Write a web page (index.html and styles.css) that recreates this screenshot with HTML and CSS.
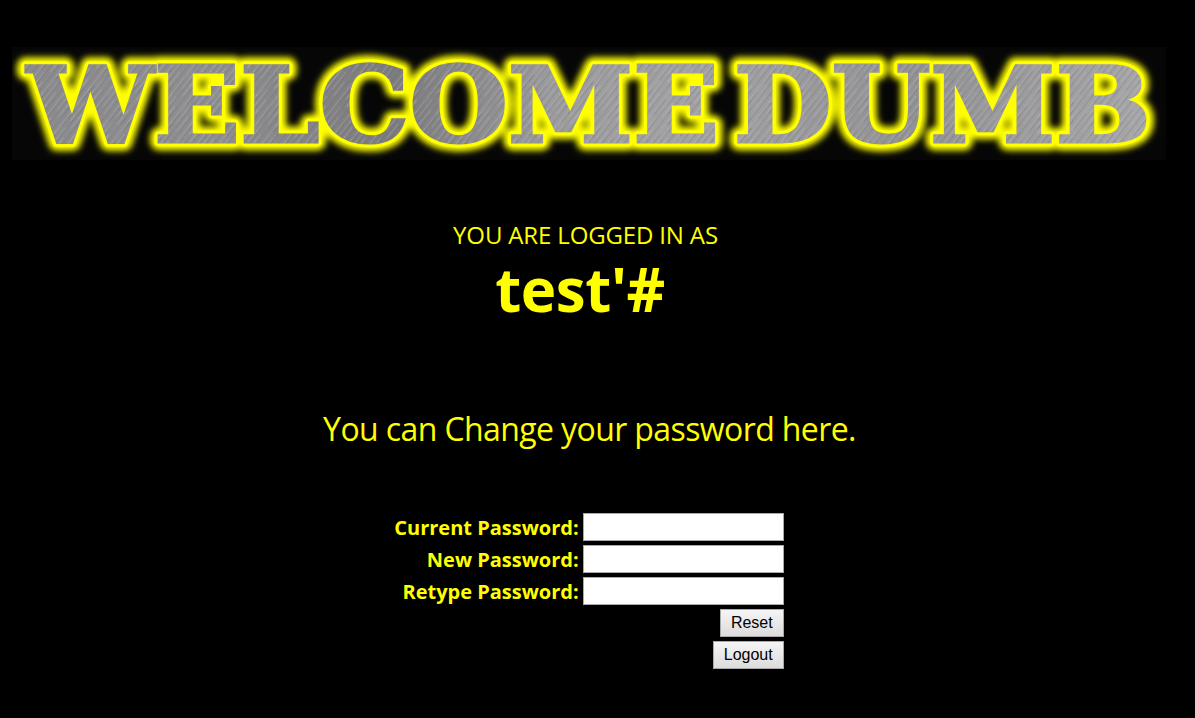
FILE: index.html
```html
<!DOCTYPE html>
<html lang="en">
<head>
<meta charset="utf-8">
<title>Welcome Dumb</title>
<link rel="stylesheet" href="styles.css">
</head>
<body>
<header class="banner">
<svg class="banner-art" viewBox="0 -10 1154 143" width="1154" height="143" role="img" aria-label="WELCOME DUMB">
<defs>
<linearGradient id="metal" gradientUnits="userSpaceOnUse" x1="0" y1="0" x2="1154" y2="60">
<stop offset="0" stop-color="#8b8b8d"/>
<stop offset="0.18" stop-color="#8f8f91"/>
<stop offset="0.33" stop-color="#7c7c7e"/>
<stop offset="0.47" stop-color="#9c9c9e"/>
<stop offset="0.6" stop-color="#a2a2a4"/>
<stop offset="0.78" stop-color="#939395"/>
<stop offset="1" stop-color="#a8a8aa"/>
</linearGradient>
<pattern id="brushed" width="31" height="17" patternUnits="userSpaceOnUse" patternTransform="rotate(-52)">
<rect y="1" width="31" height="1" fill="#c4c4c6" fill-opacity="0.25"/>
<rect y="3" width="20" height="1" fill="#5f5f61" fill-opacity="0.2"/>
<rect x="9" y="6" width="22" height="1" fill="#c4c4c6" fill-opacity="0.22"/>
<rect y="8" width="31" height="1" fill="#5f5f61" fill-opacity="0.18"/>
<rect x="4" y="11" width="18" height="1" fill="#d0d0d2" fill-opacity="0.22"/>
<rect y="14" width="31" height="1" fill="#5f5f61" fill-opacity="0.2"/>
</pattern>
<filter id="glow" x="-5%" y="-30%" width="110%" height="160%">
<feGaussianBlur stdDeviation="3"/>
</filter>
</defs>
<rect class="banner-plate" x="0" y="0" width="1154" height="113"/>
<g class="banner-word">
<text class="glow" x="15" y="94.5" textLength="1124" lengthAdjust="spacingAndGlyphs" filter="url(#glow)">WELCOME DUMB</text>
<text class="edge" x="15" y="94.5" textLength="1124" lengthAdjust="spacingAndGlyphs">WELCOME DUMB</text>
<text class="face" x="15" y="94.5" textLength="1124" lengthAdjust="spacingAndGlyphs">WELCOME DUMB</text>
<text class="grain" x="15" y="94.5" textLength="1124" lengthAdjust="spacingAndGlyphs">WELCOME DUMB</text>
</g>
</svg>
</header>
<main class="content">
<p class="logged">YOU ARE LOGGED IN AS</p>
<p class="user">test'#</p>
<p class="hint">You can Change your password here.</p>
<form class="pw-form">
<label class="pw-label" for="cur">Current Password:</label>
<input class="pw-input" id="cur" type="password">
<label class="pw-label" for="new">New Password:</label>
<input class="pw-input" id="new" type="password">
<label class="pw-label" for="re">Retype Password:</label>
<input class="pw-input" id="re" type="password">
<button class="pw-btn" type="reset">Reset</button>
<button class="pw-btn" type="button">Logout</button>
</form>
</main>
</body>
</html>
```
FILE: styles.css
```css
html, body { margin: 0; padding: 0; }
body {
  background: #000;
  color: #ff0;
  font-family: "Open Sans", "Noto Sans", sans-serif;
  height: 718px;
  overflow: hidden;
}
.banner { padding: 37px 29px 0 12px; }
.banner-art { display: block; margin-bottom: -20px; }
.banner-plate { fill: #060606; }
.banner-word text {
  font-family: "DejaVu Serif", serif;
  font-weight: 700;
  font-size: 105px;
  word-spacing: -23px;
}
.glow { fill: #ff0; stroke: #ff0; stroke-width: 17px; stroke-linejoin: round; }
.edge { fill: #ff0; stroke: #ff0; stroke-width: 9px; stroke-linejoin: round; }
.face { fill: url(#metal); stroke: url(#metal); stroke-width: 3px; stroke-linejoin: miter; }
.grain { fill: url(#brushed); stroke: url(#brushed); stroke-width: 3px; stroke-linejoin: miter; }
.content { display: flex; flex-direction: column; align-items: center; }
.logged { margin: 60px 0 0 -24px; font-size: 24px; line-height: 30px; letter-spacing: -0.15px; }
.user { margin: -1px 0 0 -35px; font-size: 60px; line-height: 80px; font-weight: 700; letter-spacing: -0.4px; }
.hint { margin: 78px 0 0 -16px; font-size: 32px; line-height: 44px; letter-spacing: -0.6px; }
.pw-form {
  display: grid;
  grid-template-columns: auto 201px;
  column-gap: 4px;
  row-gap: 4px;
  margin: 62px 0 0 -17px;
  justify-items: end;
  align-items: center;
}
.pw-label { font-size: 20px; font-weight: 700; line-height: 26px; padding-top: 2px; }
.pw-input {
  box-sizing: border-box;
  width: 201px;
  height: 28px;
  margin: 0;
  background: #fff;
  border: 1px solid #a9a9a9;
  padding: 1px 2px;
}
.pw-btn {
  grid-column: 2;
  box-sizing: border-box;
  height: 28px;
  margin: 0;
  padding: 1px 10px;
  font-family: "Liberation Sans", Arial, sans-serif;
  font-size: 16px;
  color: #000;
  border: 1px solid #a9a9a9;
  background: linear-gradient(#f5f5f5, #dcdcdc);
}
```
